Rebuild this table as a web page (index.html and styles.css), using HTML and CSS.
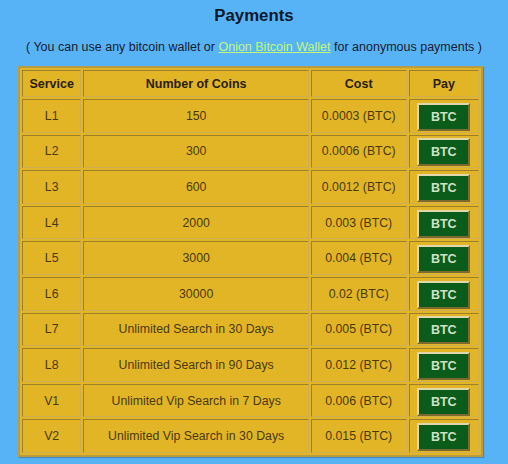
FILE: index.html
```html
<!DOCTYPE html>
<html>
<head>
<meta charset="utf-8">
<link rel="stylesheet" href="styles.css">
</head>
<body>
<h1 class="title">Payments</h1>
<p class="note">( You can use any bitcoin wallet or <a class="link" href="#">Onion Bitcoin Wallet</a> for anonymous payments )</p>
<table class="pay-table">
<thead>
<tr><th class="c-svc">Service</th><th class="c-num">Number of Coins</th><th class="c-cost">Cost</th><th class="c-pay">Pay</th></tr>
</thead>
<tbody>
<tr><td>L1</td><td>150</td><td>0.0003 (BTC)</td><td><button class="btc">BTC</button></td></tr>
<tr><td>L2</td><td>300</td><td>0.0006 (BTC)</td><td><button class="btc">BTC</button></td></tr>
<tr><td>L3</td><td>600</td><td>0.0012 (BTC)</td><td><button class="btc">BTC</button></td></tr>
<tr><td>L4</td><td>2000</td><td>0.003 (BTC)</td><td><button class="btc">BTC</button></td></tr>
<tr><td>L5</td><td>3000</td><td>0.004 (BTC)</td><td><button class="btc">BTC</button></td></tr>
<tr><td>L6</td><td>30000</td><td>0.02 (BTC)</td><td><button class="btc">BTC</button></td></tr>
<tr><td>L7</td><td>Unlimited Search in 30 Days</td><td>0.005 (BTC)</td><td><button class="btc">BTC</button></td></tr>
<tr><td>L8</td><td>Unlimited Search in 90 Days</td><td>0.012 (BTC)</td><td><button class="btc">BTC</button></td></tr>
<tr><td>V1</td><td>Unlimited Vip Search in 7 Days</td><td>0.006 (BTC)</td><td><button class="btc">BTC</button></td></tr>
<tr><td>V2</td><td>Unlimited Vip Search in 30 Days</td><td>0.015 (BTC)</td><td><button class="btc">BTC</button></td></tr>
</tbody>
</table>
</body>
</html>
```
FILE: styles.css
```css
html, body {
  margin: 0;
  padding: 0;
  background: #57b3f6;
  font-family: "Liberation Sans", Arial, sans-serif;
  width: 508px;
  height: 464px;
  overflow: hidden;
}
.title {
  margin: 0;
  padding-top: 6px;
  height: 23px;
  font-size: 16.8px;
  font-weight: bold;
  text-align: center;
  color: #10182a;
  line-height: 19px;
}
.note {
  margin: 0;
  padding-top: 11px;
  height: 26px;
  font-size: 12.5px;
  line-height: 14px;
  text-align: center;
  color: #1a2030;
}
.link {
  color: #c4f67c;
  text-decoration: underline;
}
.pay-table {
  margin-left: 18px;
  width: 465px;
  border-collapse: separate;
  border-spacing: 2px;
  background: #e2b526;
  border: 2px solid #b79b45;
  box-shadow: 1px 1px 1px rgba(40,60,90,0.35);
}
.pay-table th, .pay-table td {
  border: 1px solid #a98a30;
  border-top-color: #9c7f2a;
  border-left-color: #9c7f2a;
  border-bottom-color: #cfae55;
  border-right-color: #cfae55;
  text-align: center;
  padding: 0;
  font-size: 12.3px;
  color: #4a3a12;
}
.pay-table th {
  height: 25px;
  font-size: 12.5px;
  font-weight: bold;
  color: #2a2010;
}
.pay-table td {
  height: 31.6px;
}
.c-svc { width: 57px; }
.c-num { width: 222px; }
.c-cost { width: 93px; }
.c-pay { width: 68px; }
.btc {
  width: 53px;
  height: 28px;
  background: #0b5c1a;
  color: #cfe2c8;
  font-family: "Liberation Sans", Arial, sans-serif;
  font-size: 12.5px;
  font-weight: bold;
  border: 2px solid #e0d8aa;
  border-right-color: #7a6a30;
  border-bottom-color: #7a6a30;
  padding: 0;
  margin-top: 2px;
}
```
